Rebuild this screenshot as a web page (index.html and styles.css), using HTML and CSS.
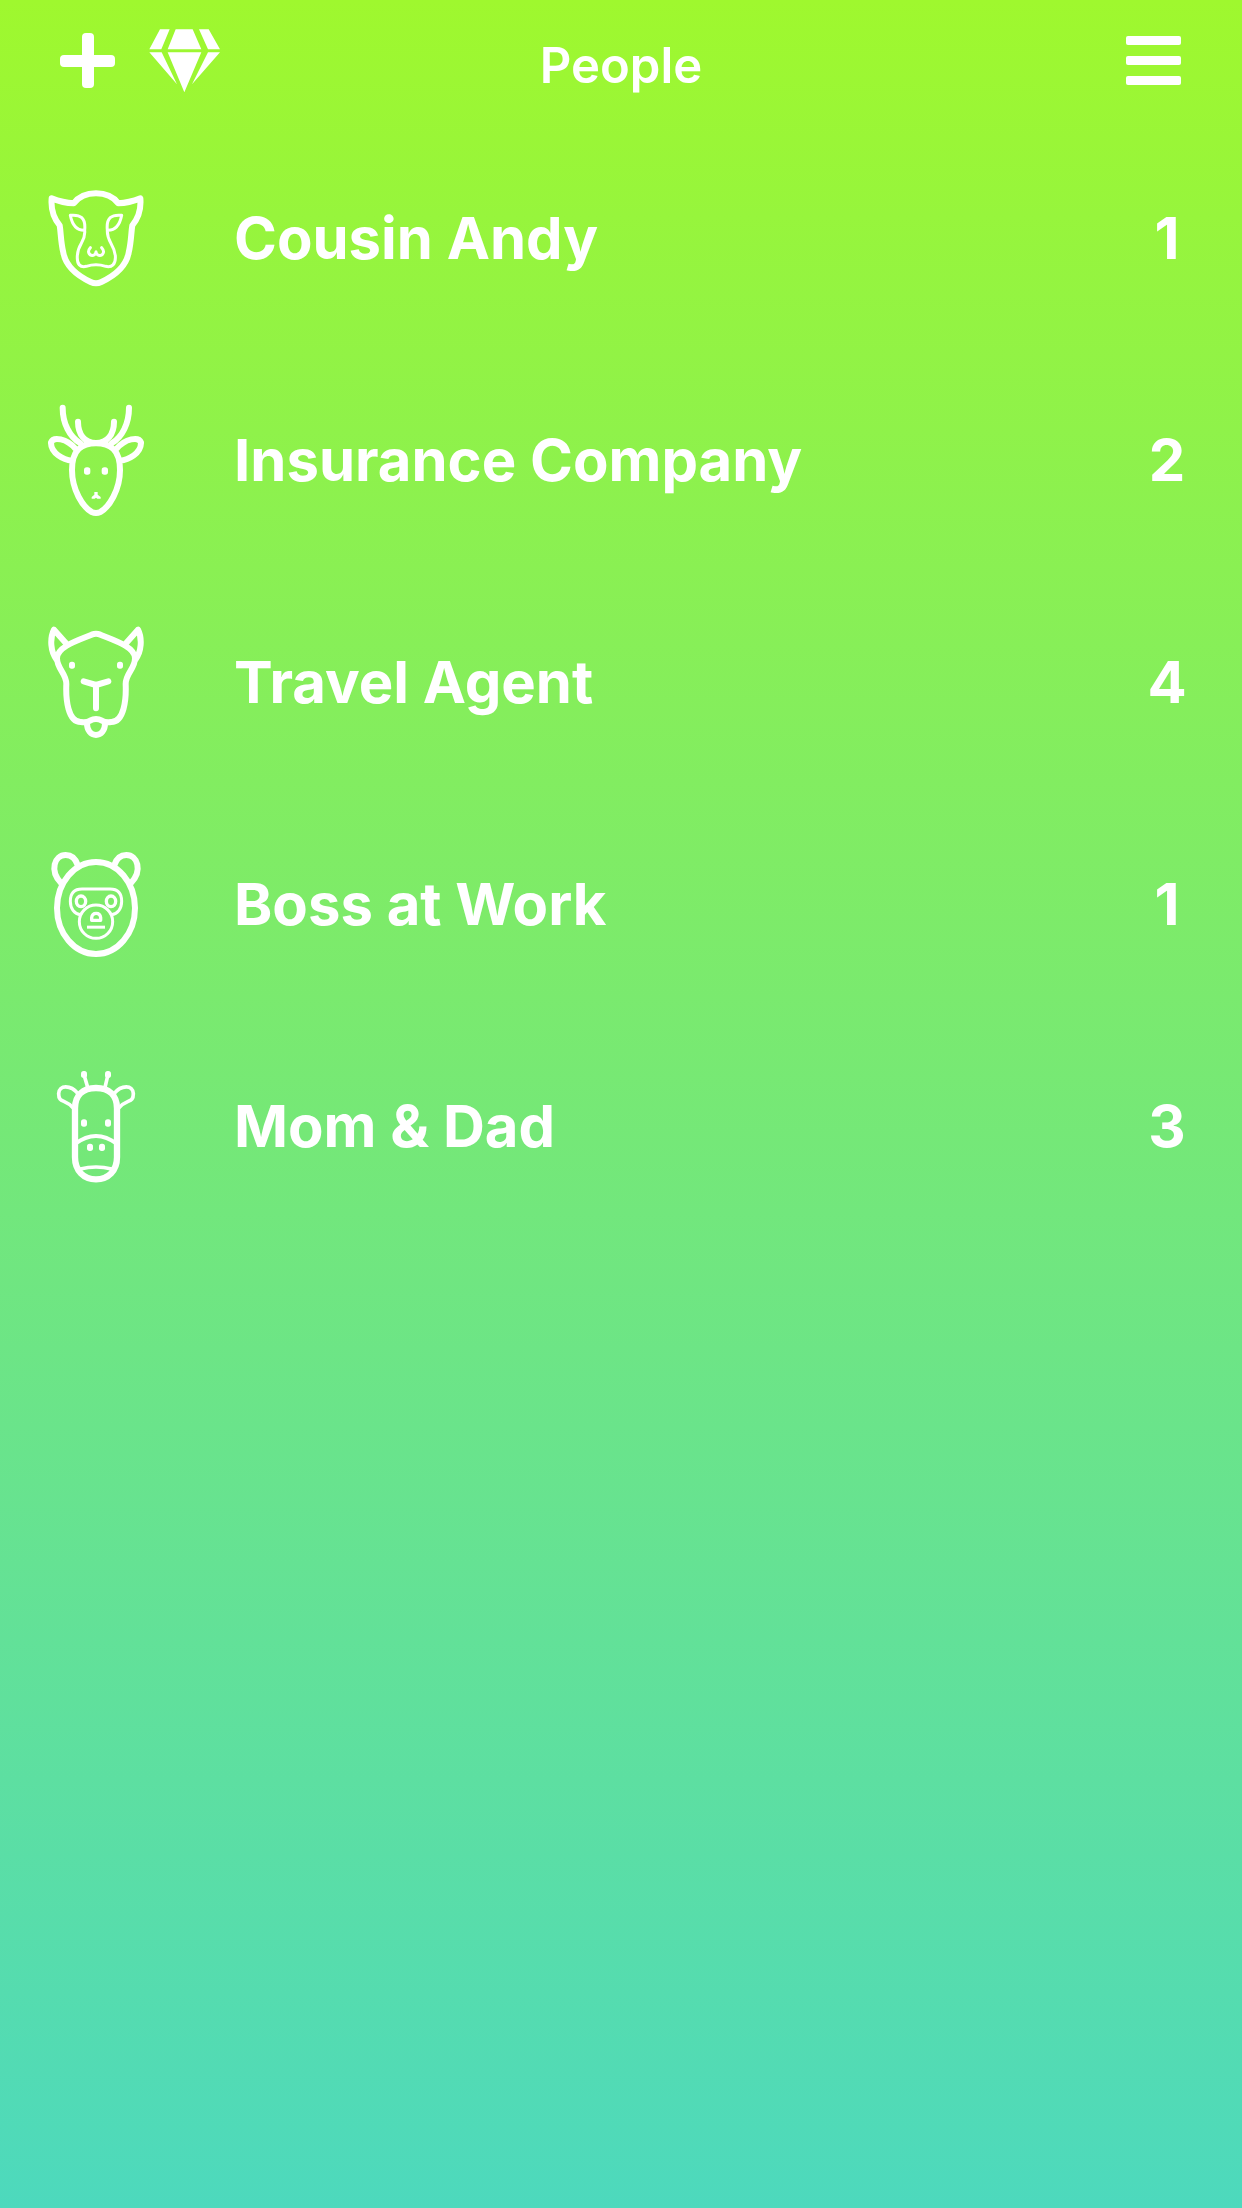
FILE: index.html
```html
<!DOCTYPE html>
<html lang="en">
<head>
<meta charset="utf-8">
<meta name="viewport" content="width=device-width, initial-scale=1">
<title>People</title>
<link rel="stylesheet" href="styles.css">
</head>
<body>
<header class="bar">
  <div class="actions">
    <button class="icon-button" type="button" aria-label="Add person">
      <svg width="56" height="56" viewBox="0 0 56 56"><rect x="22" y="0" width="12" height="55" rx="4"/><rect x="0" y="22" width="55" height="12" rx="4"/></svg>
    </button>
    <button class="icon-button" type="button" aria-label="Premium">
      <svg width="72" height="64" viewBox="327 56 216 192"><path d="M360 57h29l-25 60h-36zM407 57h51l26 60H383zM477 57h29l34 60h-36zM328 126h37l46 96zM383 126h101l-51 120zM504 126h36l-84 96z"/></svg>
    </button>
  </div>
  <h1 class="title">People</h1>
  <div class="actions actions-end">
    <button class="icon-button" type="button" aria-label="Menu">
      <svg width="56" height="50" viewBox="0 0 56 50"><rect width="55" height="9" rx="2"/><rect y="20" width="55" height="9" rx="2"/><rect y="40" width="55" height="9" rx="2"/></svg>
    </button>
  </div>
</header>
<main>
  <ul class="people">
    <li class="person">
      <svg class="animal" viewBox="54 24 288 360" aria-hidden="true">
        <path class="thick" d="M65 85C88 94 110 99 131 100C162 60 234 60 265 100C286 99 308 94 331 85C334 120 324 146 307 166C303 190 304 215 296 248C288 292 254 317 214 336Q198 344 182 336C142 317 108 292 100 248C92 215 93 190 89 166C72 146 62 120 65 85Z"/>
        <path class="thin" d="M121 136C151 133 168 143 164 181C142 182 127 168 121 136ZM275 136C245 133 228 143 232 181C254 182 269 168 275 136ZM164 181C168 216 144 219 142 257C140 284 151 293 169 289Q198 280 227 289C245 293 258 284 256 257C252 219 230 216 232 181M181 233C170 245 178 258 190 256Q198 253 198 245Q198 253 206 256C219 258 226 245 215 233"/>
      </svg>
      <span class="name">Cousin Andy</span><span class="count">1</span>
    </li>
    <li class="person">
      <svg class="animal" viewBox="54 30 288 360" aria-hidden="true">
        <path class="thick" d="M198 160C156 160 126 178 126 240C126 300 159 352 185 366Q198 372 211 366C237 352 270 300 270 240C270 178 240 160 198 160ZM98 53C98 100 119 141 150 159M144 95C144 133 164 159 198 159S252 133 252 95M297 53C297 100 277 141 246 159M136 176C110 145 70 139 63 157C62 190 101 210 126 212M260 176C286 145 326 139 333 157C334 190 295 210 270 212"/>
        <rect x="162" y="232" width="19" height="22" rx="8"/><rect x="215" y="232" width="19" height="22" rx="8"/>
        <path d="M193 306h10v8l9 7v5h-10l-4-3-4 3h-9v-5l8-7z"/>
      </svg>
      <span class="name">Insurance Company</span><span class="count">2</span>
    </li>
    <li class="person">
      <svg class="animal" viewBox="54 21 288 360" aria-hidden="true">
        <path class="thick" d="M81 130C81 94 150 74 185 59Q198 54 211 59C246 74 315 94 315 130C315 162 287 175 287 207C289 254 282 321 244 321Q225 323 216 317Q198 307 180 317Q171 323 152 321C114 321 107 254 109 207C109 175 81 162 81 130ZM81 136C61 111 59 70 72 44L110 87M315 136C335 111 337 70 324 44L286 87M161 199L198 210L235 199M198 210V280M171 321C168 373 228 373 225 321"/>
        <rect x="117" y="140" width="18" height="21" rx="8"/><rect x="261" y="140" width="18" height="21" rx="8"/>
      </svg>
      <span class="name">Travel Agent</span><span class="count">4</span>
    </li>
    <li class="person">
      <svg class="animal" viewBox="54 12 288 360" aria-hidden="true">
        <ellipse class="thick" cx="198" cy="204" rx="117" ry="138"/>
        <path class="thick" d="M93 129C58 92 73 45 107 45C128 45 138 60 143 75M303 129C338 92 323 45 289 45C268 45 258 60 253 75"/>
        <path class="thin" d="M152 224C132 222 121 205 121 184Q121 147 156 147H240Q275 147 275 184C275 205 264 222 244 224"/>
        <circle class="thin" cx="198" cy="245" r="50"/>
        <ellipse class="eye" cx="153" cy="184" rx="14" ry="16"/><ellipse class="eye" cx="243" cy="184" rx="14" ry="16"/>
        <path class="eye" d="M185 241V233C187 216 210 216 212 233V241Z"/><path d="M171 257h54v9h-54z"/>
      </svg>
      <span class="name">Boss at Work</span><span class="count">1</span>
    </li>
    <li class="person">
      <svg class="animal" viewBox="54 18 288 360" aria-hidden="true">
        <path class="heavy" d="M135 145C135 106 159 84 198 84S261 106 261 145V292C261 332 235 358 198 358S135 332 135 292Z"/>
        <path class="muzzle" d="M135 252Q198 204 261 252M151 327Q198 315 245 327M144 101C122 74 87 74 86 101C86 130 104 116 129 143M252 101C274 74 309 74 310 101C310 130 292 116 267 143M162 44L173 82M234 44L225 82"/>
        <rect x="153" y="33" width="18" height="21" rx="8"/><rect x="225" y="33" width="18" height="21" rx="8"/>
        <rect x="153" y="178" width="18" height="22" rx="8"/><rect x="225" y="178" width="18" height="22" rx="8"/>
        <rect x="171" y="251" width="18" height="22" rx="8"/><rect x="207" y="251" width="18" height="22" rx="8"/>
      </svg>
      <span class="name">Mom &amp; Dad</span><span class="count">3</span>
    </li>
  </ul>
</main>
</body>
</html>
```
FILE: styles.css
```css
* { box-sizing: border-box; }
body {
  margin: 0;
  min-height: 100vh;
  color: #fff;
  background: linear-gradient(#9ff82e, #4dd9bd);
  font-family: Inter, "Liberation Sans", sans-serif;
}
.bar {
  display: grid;
  grid-template-columns: 1fr auto 1fr;
  align-items: center;
  height: 127px;
  padding: 0 60px 6px;
}
.actions { display: flex; align-items: center; gap: 33px; }
.actions-end { justify-content: flex-end; }
.icon-button {
  padding: 0;
  border: 0;
  background: none;
  color: inherit;
  cursor: pointer;
}
.icon-button svg { display: block; fill: currentColor; }
.title { margin: 0; padding-top: 10px; font-size: 49px; line-height: 60px; font-weight: 600; }
.people { margin: 0; padding: 0; list-style: none; }
.person {
  display: flex;
  align-items: center;
  height: 222px;
  padding: 0 47px 0 48px;
}
.animal { flex: none; width: 96px; height: 120px; fill: #fff; }
.thick, .thin, .heavy, .muzzle, .eye {
  fill: none;
  stroke: #fff;
  stroke-linecap: round;
  stroke-linejoin: round;
}
.thick { stroke-width: 18; }
.thin { stroke-width: 9; }
.heavy { stroke-width: 19; }
.muzzle { stroke-width: 11; }
.eye { stroke-width: 10; }
.name {
  flex: 1;
  padding-left: 90px;
  font-size: 58px;
  line-height: 72px;
  font-weight: 700;
}
.count {
  width: 56px;
  font-size: 58px;
  line-height: 72px;
  font-weight: 700;
  text-align: center;
}
```
